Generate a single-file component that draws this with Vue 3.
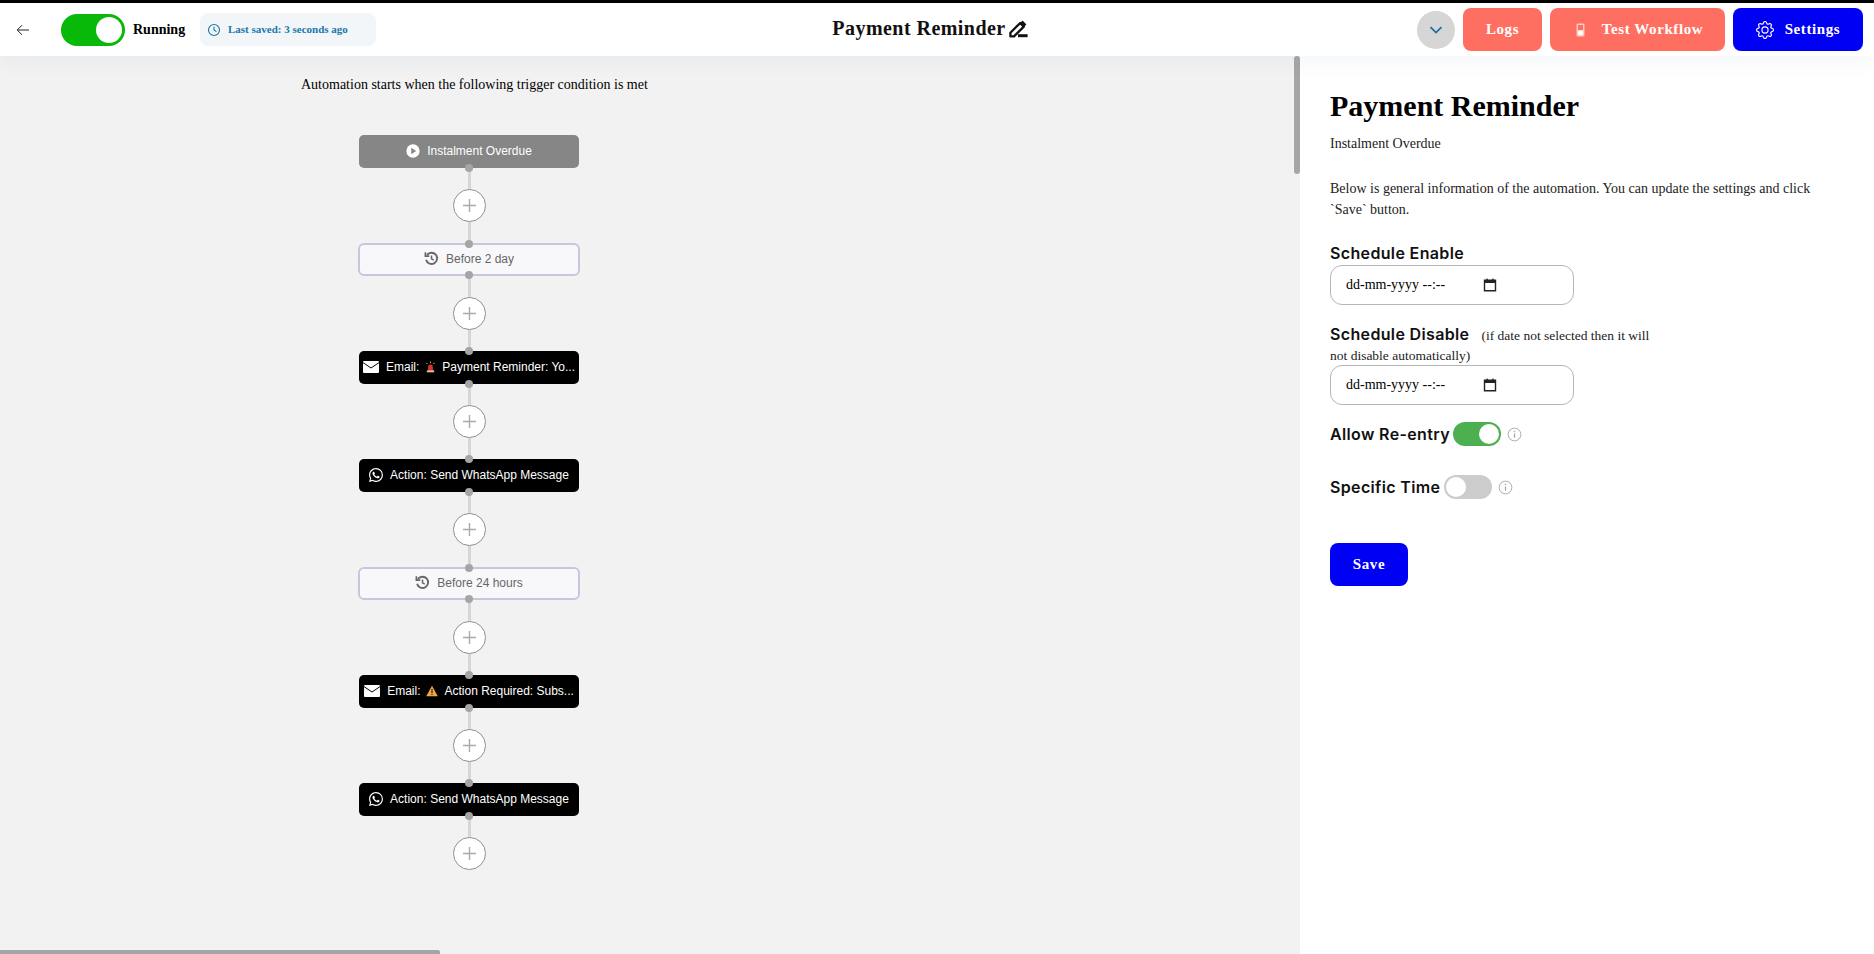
<script setup>
const nodes = [
  { id: 1, kind: 'trigger', icon: 'play', label: 'Instalment Overdue' },
  { id: 2, kind: 'delay', icon: 'history', label: 'Before 2 day' },
  { id: 3, kind: 'action', icon: 'mail', label: 'Email:', badge: 'siren', rest: 'Payment Reminder: Yo...' },
  { id: 4, kind: 'action', icon: 'whatsapp', label: 'Action: Send WhatsApp Message' },
  { id: 5, kind: 'delay', icon: 'history', label: 'Before 24 hours' },
  { id: 6, kind: 'action', icon: 'mail', label: 'Email:', badge: 'warn', rest: 'Action Required: Subs...' },
  { id: 7, kind: 'action', icon: 'whatsapp', label: 'Action: Send WhatsApp Message' }
];
</script>

<template>
  <div class="page">
    <header class="topbar">
      <div class="top-left">
        <svg class="back" viewBox="0 0 16 16" fill="none" stroke="#222" stroke-width="1">
          <path d="M14 8H2.5M7 3.2 2.2 8 7 12.8" />
        </svg>
        <span class="switch-big"><i></i></span>
        <span class="running">Running</span>
        <div class="saved">
          <svg viewBox="0 0 16 16" fill="none" stroke="#2176a8" stroke-width="1.3">
            <circle cx="8" cy="8" r="6.3" />
            <path d="M8 4.2V8l2.8 1.8" />
          </svg>
          <span>Last saved: 3 seconds ago</span>
        </div>
      </div>

      <div class="top-title">
        <span>Payment Reminder</span>
        <svg viewBox="0 0 20 20">
          <path d="M2.4 13.8 12.2 4l3.6 3.6L6 17.4H2.4z" fill="none" stroke="#111" stroke-width="2.3" stroke-linejoin="round" />
          <path d="M11.4 4.8l3.8 3.8 3.2-3.2-3.8-3.8z" fill="#111" />
          <rect x="10" y="15.2" width="9.6" height="3" fill="#111" />
        </svg>
      </div>

      <div class="top-right">
        <button class="chevron">
          <svg viewBox="0 0 16 16" fill="none" stroke="#1d6fa0" stroke-width="1.8">
            <path d="M2.5 5.2 8 10.6l5.5-5.4" />
          </svg>
        </button>
        <button class="btn coral logs">Logs</button>
        <button class="btn coral test">
          <svg viewBox="0 0 9 14">
            <rect x="0.5" y="0.5" width="8" height="13" rx="1.5" fill="#ffc9c3" />
            <rect x="2" y="2" width="5" height="5" fill="#ff6f61" />
            <circle cx="4.5" cy="9.8" r="2.6" fill="#fff" />
          </svg>
          <span>Test Workflow</span>
        </button>
        <button class="btn blue settings">
          <svg viewBox="0 0 16 16" fill="#fff">
            <path d="M8 4.754a3.246 3.246 0 1 0 0 6.492 3.246 3.246 0 0 0 0-6.492zM5.754 8a2.246 2.246 0 1 1 4.492 0 2.246 2.246 0 0 1-4.492 0z" />
            <path d="M9.796 1.343c-.527-1.79-3.065-1.79-3.592 0l-.094.319a.873.873 0 0 1-1.255.52l-.292-.16c-1.64-.892-3.433.902-2.54 2.541l.159.292a.873.873 0 0 1-.52 1.255l-.319.094c-1.79.527-1.79 3.065 0 3.592l.319.094a.873.873 0 0 1 .52 1.255l-.16.292c-.892 1.64.901 3.434 2.541 2.54l.292-.159a.873.873 0 0 1 1.255.52l.094.319c.527 1.79 3.065 1.79 3.592 0l.094-.319a.873.873 0 0 1 1.255-.52l.292.16c1.64.893 3.434-.902 2.54-2.541l-.159-.292a.873.873 0 0 1 .52-1.255l.319-.094c1.79-.527 1.79-3.065 0-3.592l-.319-.094a.873.873 0 0 1-.52-1.255l.16-.292c.893-1.64-.902-3.433-2.541-2.54l-.292.159a.873.873 0 0 1-1.255-.52l-.094-.319zm-2.633.283c.246-.835 1.428-.835 1.674 0l.094.319a1.873 1.873 0 0 0 2.693 1.115l.291-.16c.764-.415 1.6.42 1.184 1.185l-.159.292a1.873 1.873 0 0 0 1.116 2.692l.318.094c.835.246.835 1.428 0 1.674l-.319.094a1.873 1.873 0 0 0-1.115 2.693l.16.291c.415.764-.42 1.6-1.185 1.184l-.291-.159a1.873 1.873 0 0 0-2.693 1.116l-.094.318c-.246.835-1.428.835-1.674 0l-.094-.319a1.873 1.873 0 0 0-2.692-1.115l-.292.16c-.764.415-1.6-.42-1.184-1.185l.159-.291A1.873 1.873 0 0 0 1.945 8.93l-.319-.094c-.835-.246-.835-1.428 0-1.674l.319-.094A1.873 1.873 0 0 0 3.06 4.377l-.16-.292c-.415-.764.42-1.6 1.185-1.184l.292.159a1.873 1.873 0 0 0 2.692-1.115l.094-.319z" />
          </svg>
          <span>Settings</span>
        </button>
      </div>
    </header>

    <main class="body">
      <section class="canvas">
        <p class="intro">Automation starts when the following trigger condition is met</p>

        <div class="flow">
          <template v-for="n in nodes" :key="n.id">
            <div class="node" :class="n.kind">
              <i v-if="n.id > 1" class="dot top"></i>
              <svg v-if="n.icon === 'play'" class="ico play" viewBox="0 0 16 16">
                <circle cx="8" cy="8" r="7.6" fill="#fff" />
                <path d="M6 4.4 11.6 8 6 11.6z" fill="#868686" />
              </svg>
              <svg v-if="n.icon === 'history'" class="ico hist" viewBox="0 0 16 16" fill="none" stroke="#666" stroke-width="2">
                <path d="M3.2 4.2A6 6 0 1 1 2.2 9.4" />
                <path d="M1.5 1.4v4.1h4.1" stroke-width="1.8" />
                <path d="M8 4.8v3.6l2.4 1.4" stroke-width="1.6" />
              </svg>
              <svg v-if="n.icon === 'mail'" class="ico mail" viewBox="0 0 16 12">
                <rect width="16" height="12" rx="1" fill="#fff" />
                <path d="M0 1.6 8 7l8-5.4" fill="none" stroke="#000" stroke-width="1" />
              </svg>
              <svg v-if="n.icon === 'whatsapp'" class="ico wa" viewBox="0 0 16 16" fill="#fff">
                <path d="M13.601 2.326A7.854 7.854 0 0 0 7.994 0C3.627 0 .068 3.558.064 7.926c0 1.399.366 2.76 1.057 3.965L0 16l4.204-1.102a7.933 7.933 0 0 0 3.79.965h.004c4.368 0 7.926-3.558 7.93-7.93A7.898 7.898 0 0 0 13.6 2.326zM7.994 14.521a6.573 6.573 0 0 1-3.356-.92l-.24-.144-2.494.654.666-2.433-.156-.251a6.56 6.56 0 0 1-1.007-3.505c0-3.626 2.957-6.584 6.591-6.584a6.56 6.56 0 0 1 4.66 1.931 6.557 6.557 0 0 1 1.928 4.66c-.004 3.639-2.961 6.592-6.592 6.592zm3.615-4.934c-.197-.099-1.17-.578-1.353-.646-.182-.065-.315-.099-.445.099-.133.197-.513.646-.627.775-.114.133-.232.148-.43.05-.197-.1-.836-.308-1.592-.985-.59-.525-.985-1.175-1.103-1.372-.114-.198-.011-.304.088-.403.087-.088.197-.232.296-.346.1-.114.133-.198.198-.33.065-.134.034-.248-.015-.347-.05-.099-.445-1.076-.612-1.47-.16-.389-.323-.335-.445-.34-.114-.007-.247-.007-.38-.007a.729.729 0 0 0-.529.247c-.182.198-.691.677-.691 1.654 0 .977.71 1.916.81 2.049.098.133 1.394 2.132 3.383 2.992.47.205.84.326 1.129.418.475.152.904.129 1.246.08.38-.058 1.171-.48 1.338-.943.164-.464.164-.86.114-.943-.049-.084-.182-.133-.38-.232z" />
              </svg>
              <span class="label">{{ n.label }}</span>
              <svg v-if="n.badge === 'siren'" class="badge" viewBox="0 0 12 12">
                <path d="M3.4 10V6a2.6 2.6 0 0 1 5.2 0v4z" fill="#d9342b" />
                <rect x="2" y="9.6" width="8" height="2.2" fill="#e8b9a8" />
                <path d="M6 0v1.8M1.6 1.4l1.2 1.4M10.4 1.4 9.2 2.8" stroke="#e8d6c8" stroke-width="0.9" fill="none" />
              </svg>
              <svg v-if="n.badge === 'warn'" class="badge warn" viewBox="0 0 12 12">
                <path d="M6 .8 11.8 11.2H.2z" fill="#f0a63c" />
                <rect x="5.4" y="4.2" width="1.2" height="3.8" fill="#222" />
                <rect x="5.4" y="8.8" width="1.2" height="1.2" fill="#222" />
              </svg>
              <span v-if="n.rest" class="label">{{ n.rest }}</span>
              <i class="dot bottom"></i>
            </div>
            <div class="link">
              <span class="add">
                <svg viewBox="0 0 13 13" stroke="#a9a9a9" stroke-width="1.4"><path d="M6.5 0v13M0 6.5h13" /></svg>
              </span>
            </div>
          </template>
        </div>

        <i class="scroll-v"></i>
        <i class="scroll-h"></i>
      </section>

      <aside class="panel">
        <h1>Payment Reminder</h1>
        <p class="sub">Instalment Overdue</p>
        <p class="desc">Below is general information of the automation. You can update the settings and click `Save` button.</p>

        <div class="field first">
          <label>Schedule Enable</label>
          <div class="date">
            <span>dd-mm-yyyy --:--</span>
            <svg viewBox="0 0 14 14"><path d="M1.5 2.2h11v10.6h-11z" fill="none" stroke="#222" stroke-width="1.4" /><rect x="1" y="2" width="12" height="3" fill="#222" /><rect x="3.4" y="0.6" width="1.4" height="2" fill="#222" /><rect x="9.2" y="0.6" width="1.4" height="2" fill="#222" /></svg>
          </div>
        </div>

        <div class="field second">
          <div class="note-wrap">
            <div class="note-line">
              <label>Schedule Disable</label>
              <small>(if date not selected then it will</small>
            </div>
            <small>not disable automatically)</small>
          </div>
          <div class="date">
            <span>dd-mm-yyyy --:--</span>
            <svg viewBox="0 0 14 14"><path d="M1.5 2.2h11v10.6h-11z" fill="none" stroke="#222" stroke-width="1.4" /><rect x="1" y="2" width="12" height="3" fill="#222" /><rect x="3.4" y="0.6" width="1.4" height="2" fill="#222" /><rect x="9.2" y="0.6" width="1.4" height="2" fill="#222" /></svg>
          </div>
        </div>

        <div class="row reentry">
          <label>Allow Re-entry</label>
          <span class="switch on"><i></i></span>
          <svg class="info" viewBox="0 0 16 16" fill="none" stroke="#aaa">
            <circle cx="8" cy="8" r="6.8" />
            <path d="M8 7v4.4" stroke-width="1.4" />
            <circle cx="8" cy="4.8" r="0.5" />
          </svg>
        </div>

        <div class="row specific">
          <label>Specific Time</label>
          <span class="switch"><i></i></span>
          <svg class="info" viewBox="0 0 16 16" fill="none" stroke="#aaa">
            <circle cx="8" cy="8" r="6.8" />
            <path d="M8 7v4.4" stroke-width="1.4" />
            <circle cx="8" cy="4.8" r="0.5" />
          </svg>
        </div>

        <button class="btn blue save">Save</button>
      </aside>
    </main>
  </div>
</template>

<style scoped>
.page {
  height: 954px;
  display: flex;
  flex-direction: column;
  overflow: hidden;
  border-top: 3px solid #000;
  box-sizing: border-box;
  font-family: "Liberation Serif", serif;
  color: #000;
  background: #fff;
}

.topbar {
  height: 53px;
  flex: none;
  display: grid;
  grid-template-columns: 1fr auto 1fr;
  align-items: center;
  background: #fff;
  position: relative;
  z-index: 2;
  box-shadow: 0 4px 22px rgba(20, 90, 160, 0.06);
}

.top-left {
  display: flex;
  align-items: center;
  padding-left: 15px;
}

.back {
  width: 16px;
  height: 16px;
  margin-right: 30px;
}

.switch-big {
  width: 64px;
  height: 32px;
  border-radius: 16px;
  background: #09b909;
  display: flex;
  align-items: center;
  justify-content: flex-end;
  padding-right: 3px;
  box-sizing: border-box;
}

.switch-big i {
  width: 26px;
  height: 26px;
  border-radius: 50%;
  background: #fff;
}

.running {
  font-size: 14px;
  font-weight: 700;
  margin-left: 8px;
  width: 67px;
}

.saved {
  width: 176px;
  height: 33px;
  box-sizing: border-box;
  border-radius: 8px;
  background: #f3f6f8;
  display: flex;
  align-items: center;
  gap: 7px;
  padding-left: 7px;
  font-size: 11px;
  font-weight: 700;
  color: #2176a8;
}

.saved span {
  padding-bottom: 2px;
}

.saved svg {
  width: 14px;
  height: 14px;
}

.top-title {
  display: flex;
  align-items: center;
  gap: 2px;
  margin: -2px 14px 0 0;
  font-size: 20px;
  font-weight: 700;
  letter-spacing: 0.45px;
  color: #111;
}

.top-title svg {
  width: 20px;
  height: 20px;
}

.top-right {
  display: flex;
  justify-content: flex-end;
  align-items: center;
  gap: 8px;
  padding-right: 11px;
}

.chevron {
  width: 38px;
  height: 38px;
  border: 0;
  padding: 0;
  border-radius: 50%;
  background: #d6d6d6;
  display: flex;
  align-items: center;
  justify-content: center;
}

.chevron svg {
  width: 16px;
  height: 16px;
}

.btn {
  height: 43px;
  border: 0;
  padding: 0;
  border-radius: 8px;
  color: #fff;
  font-family: "Liberation Serif", serif;
  font-size: 15px;
  font-weight: 700;
  letter-spacing: 0.6px;
  display: flex;
  align-items: center;
  justify-content: center;
}

.coral {
  background: #ff6f61;
}

.blue {
  background: #0000f5;
}

.logs {
  width: 79px;
}

.test {
  width: 175px;
  gap: 17px;
  padding-left: 4px;
}

.test svg {
  width: 9px;
  height: 14px;
}

.settings {
  width: 130px;
  gap: 11px;
}

.settings svg {
  width: 18px;
  height: 18px;
}

.body {
  flex: 1;
  display: flex;
  min-height: 0;
}

.canvas {
  flex: 1;
  position: relative;
  overflow: hidden;
  background: #f2f2f2;
  padding-left: 301px;
}

.intro {
  margin: 21px 0 0;
  font-size: 14px;
  line-height: 16px;
}

.flow {
  width: 222px;
  margin: 42px 0 0 57px;
  display: flex;
  flex-direction: column;
}

.node {
  height: 33px;
  box-sizing: border-box;
  position: relative;
  border-radius: 5px;
  padding-bottom: 2px;
  display: flex;
  align-items: center;
  justify-content: center;
  font-family: "Liberation Sans", Arial, sans-serif;
  font-size: 12px;
  white-space: nowrap;
}

.trigger {
  background: #868686;
  color: #fff;
  margin: 0 1px;
}

.action {
  background: #000;
  color: #fff;
  margin: 0 1px;
}

.delay {
  background: #f8f8fb;
  border: 2px solid #c5c7df;
  border-radius: 6px;
  color: #666;
}

.dot {
  position: absolute;
  left: 50%;
  width: 8px;
  height: 8px;
  margin-left: -4px;
  border-radius: 50%;
  background: #a5a5a5;
}

.dot.top {
  top: -4px;
}

.dot.bottom {
  bottom: -4px;
}

.delay .dot.top {
  top: -5px;
}

.delay .dot.bottom {
  bottom: -5px;
}

.ico {
  flex: none;
}

.play {
  width: 14px;
  height: 14px;
  margin-right: 7px;
}

.hist {
  width: 15px;
  height: 15px;
  margin-right: 7px;
}

.mail {
  width: 16px;
  height: 12px;
  margin-right: 7px;
}

.wa {
  width: 14px;
  height: 14px;
  margin-right: 7px;
}

.badge {
  width: 11px;
  height: 12px;
  margin: 0 6px 0 6px;
  flex: none;
}

.badge.warn {
  width: 12px;
}

.link {
  height: 75px;
  display: flex;
  align-items: center;
  justify-content: center;
  background: linear-gradient(#d6d6d6, #d6d6d6) center / 3px 100% no-repeat;
}

.link:last-child {
  background-size: 3px 50%;
  background-position: center top;
}

.add {
  width: 33px;
  height: 33px;
  box-sizing: border-box;
  border: 1.5px solid #909090;
  border-radius: 50%;
  background: #fff;
  display: flex;
  align-items: center;
  justify-content: center;
}

.add svg {
  width: 13px;
  height: 13px;
}

.scroll-v {
  position: absolute;
  right: 0;
  top: 0;
  width: 6px;
  height: 118px;
  border-radius: 3px;
  background: #a6a6a6;
}

.scroll-h {
  position: absolute;
  left: 0;
  bottom: 0;
  width: 440px;
  height: 4px;
  border-radius: 0 2px 0 0;
  background: #a6a6a6;
}

.panel {
  width: 574px;
  flex: none;
  box-sizing: border-box;
  padding: 0 40px 0 30px;
  background: #fff;
  font-size: 14px;
}

h1 {
  margin: 33px 0 0;
  font-size: 30px;
  line-height: 34px;
  font-weight: 700;
}

.sub {
  margin: 13px 0 0;
  line-height: 16px;
  color: #222;
}

.desc {
  margin: 26px 0 0;
  line-height: 21px;
  color: #222;
}

label {
  font-family: Inter, "Liberation Sans", sans-serif;
  font-size: 16px;
  font-weight: 600;
  letter-spacing: 0.35px;
  color: #111;
}

.field.first {
  margin-top: 22px;
}

.field.first label {
  display: block;
  line-height: 23px;
}

.field.second {
  margin-top: 19px;
}

.note-wrap {
  line-height: 21px;
  margin-bottom: -1px;
}

.note-line {
  height: 21px;
  display: flex;
  align-items: baseline;
  gap: 12px;
}

small {
  display: block;
  font-size: 13.5px;
  color: #222;
}

.date {
  width: 244px;
  height: 40px;
  box-sizing: border-box;
  border: 1px solid #b5b5b5;
  border-radius: 12px;
  display: flex;
  align-items: center;
  padding-left: 15px;
  font-size: 14px;
}

.date span {
  width: 137px;
}

.date svg {
  width: 14px;
  height: 14px;
}

.row {
  display: flex;
  align-items: center;
}

.reentry {
  margin-top: 17px;
  height: 24px;
}

.specific {
  margin-top: 29px;
  height: 24px;
}

.reentry label {
  margin-right: 3px;
}

.specific label {
  margin-right: 4px;
}

.switch {
  width: 48px;
  height: 24px;
  box-sizing: border-box;
  border-radius: 12px;
  padding: 2px;
  background: #cccccc;
  display: flex;
}

.switch i {
  width: 20px;
  height: 20px;
  border-radius: 50%;
  background: #fff;
}

.switch.on {
  background: #4caf50;
  justify-content: flex-end;
}

.info {
  width: 15px;
  height: 15px;
  margin-left: 6px;
}

.save {
  width: 78px;
  margin-top: 44px;
}
</style>
